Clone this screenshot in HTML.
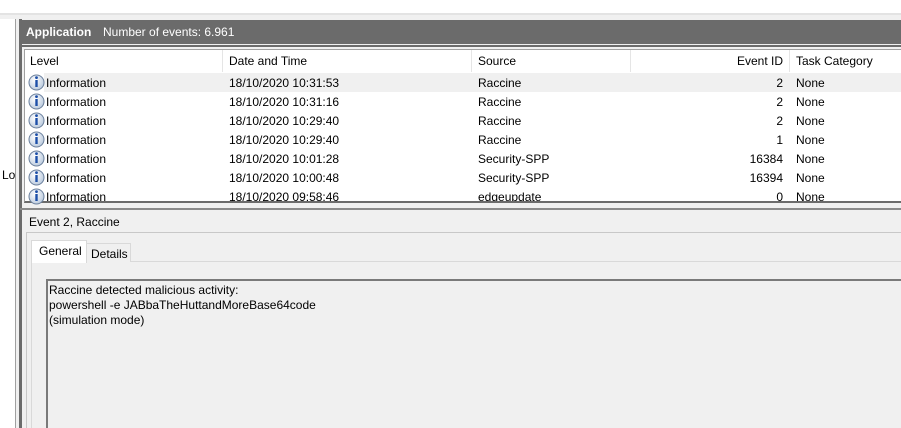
<!DOCTYPE html>
<html><head><meta charset="utf-8"><style>
*{margin:0;padding:0;box-sizing:border-box}
body{width:901px;height:428px;overflow:hidden;background:#f0f0f0;font-family:"Liberation Sans",sans-serif;font-size:12px;color:#000;position:relative}
.a{position:absolute}
.t{position:absolute;white-space:nowrap;line-height:14px}
.row{position:absolute;left:25px;right:0;height:19px}
.ic{position:absolute;left:28px;top:1px;width:17px;height:17px}
</style></head><body>
<div class="a" style="left:0;top:0;width:901px;height:13px;background:#fff"></div>
<div class="a" style="left:0;top:13px;width:901px;height:2px;background:#e3e3e3"></div>
<div class="a" style="left:0;top:19px;width:15px;height:409px;background:#fff"></div>
<div class="a" style="left:15px;top:19px;width:1px;height:409px;background:#a0a0a0"></div>
<div class="t" style="left:2px;top:168px">Lo</div>
<div class="a" style="left:19px;top:19px;width:3px;height:409px;background:#6b6b6b"></div>
<div class="a" style="left:20px;top:20px;width:881px;height:24px;background:#6b6b6b"></div>
<div class="t" style="left:26px;top:25px;color:#fff;font-weight:bold">Application</div>
<div class="t" style="left:103px;top:25px;color:#fff">Number of events: 6.961</div>
<div class="a" style="left:20px;top:45px;width:881px;height:2px;background:#6b6b6b"></div>
<div class="a" style="left:24px;top:49px;width:877px;height:154px;background:#fff;border-left:1px solid #a0a0a0;border-top:1px solid #a0a0a0;border-bottom:2px solid #6b6b6b"></div>
<div class="a" style="left:222px;top:50px;width:1px;height:22px;background:#e5e5e5"></div>
<div class="a" style="left:471px;top:50px;width:1px;height:22px;background:#e5e5e5"></div>
<div class="a" style="left:630px;top:50px;width:1px;height:22px;background:#e5e5e5"></div>
<div class="a" style="left:789px;top:50px;width:1px;height:22px;background:#e5e5e5"></div>
<div class="t" style="left:30px;top:54px">Level</div>
<div class="t" style="left:229px;top:54px">Date and Time</div>
<div class="t" style="left:478px;top:54px">Source</div>
<div class="t" style="left:630px;width:153px;text-align:right;top:54px">Event ID</div>
<div class="t" style="left:796px;top:54px">Task Category</div>
<div class="a" style="left:44px;top:73px;width:857px;height:19px;background:#f0f0f0"></div>
<div id="rows"></div>
<script></script>
<!-- rows -->
<div class="row" style="top:73px"></div>

<svg class="a" style="left:0;top:0" width="901" height="428">
<defs><radialGradient id="g" cx="40%" cy="35%" r="70%"><stop offset="0" stop-color="#fff"/><stop offset="1" stop-color="#b8c8dc"/></radialGradient></defs>
<g id="i"><circle cx="36.5" cy="82.5" r="7.5" fill="url(#g)" stroke="#6a7f9c"/><rect x="35.3" y="80" width="2.4" height="7" fill="#1d4fa8"/><circle cx="36.5" cy="77.6" r="1.4" fill="#1d4fa8"/></g>
<use href="#i" y="19"/><use href="#i" y="38"/><use href="#i" y="57"/><use href="#i" y="76"/><use href="#i" y="95"/><use href="#i" y="114"/>
</svg>

<div class="a" style="left:25px;top:73px;width:876px;height:128px;overflow:hidden">
<div style="position:relative;height:128px">
<div class="t" style="left:21px;top:3px">Information</div><div class="t" style="left:204px;top:3px">18/10/2020 10:31:53</div><div class="t" style="left:453px;top:3px">Raccine</div><div class="t" style="left:605px;width:153px;text-align:right;top:3px">2</div><div class="t" style="left:771px;top:3px">None</div>
<div class="t" style="left:21px;top:22px">Information</div><div class="t" style="left:204px;top:22px">18/10/2020 10:31:16</div><div class="t" style="left:453px;top:22px">Raccine</div><div class="t" style="left:605px;width:153px;text-align:right;top:22px">2</div><div class="t" style="left:771px;top:22px">None</div>
<div class="t" style="left:21px;top:41px">Information</div><div class="t" style="left:204px;top:41px">18/10/2020 10:29:40</div><div class="t" style="left:453px;top:41px">Raccine</div><div class="t" style="left:605px;width:153px;text-align:right;top:41px">2</div><div class="t" style="left:771px;top:41px">None</div>
<div class="t" style="left:21px;top:60px">Information</div><div class="t" style="left:204px;top:60px">18/10/2020 10:29:40</div><div class="t" style="left:453px;top:60px">Raccine</div><div class="t" style="left:605px;width:153px;text-align:right;top:60px">1</div><div class="t" style="left:771px;top:60px">None</div>
<div class="t" style="left:21px;top:79px">Information</div><div class="t" style="left:204px;top:79px">18/10/2020 10:01:28</div><div class="t" style="left:453px;top:79px">Security-SPP</div><div class="t" style="left:605px;width:153px;text-align:right;top:79px">16384</div><div class="t" style="left:771px;top:79px">None</div>
<div class="t" style="left:21px;top:98px">Information</div><div class="t" style="left:204px;top:98px">18/10/2020 10:00:48</div><div class="t" style="left:453px;top:98px">Security-SPP</div><div class="t" style="left:605px;width:153px;text-align:right;top:98px">16394</div><div class="t" style="left:771px;top:98px">None</div>
<div class="t" style="left:21px;top:117px">Information</div><div class="t" style="left:204px;top:117px">18/10/2020 09:58:46</div><div class="t" style="left:453px;top:117px">edgeupdate</div><div class="t" style="left:605px;width:153px;text-align:right;top:117px">0</div><div class="t" style="left:771px;top:117px">None</div>
</div></div>

<div class="a" style="left:20px;top:208px;width:881px;height:2px;background:#8a8a8a"></div>
<div class="t" style="left:29px;top:215px">Event 2, Raccine</div>
<div class="a" style="left:26px;top:232px;width:875px;height:1px;background:#c8c8c8"></div>
<div class="a" style="left:26px;top:233px;width:1px;height:195px;background:#c8c8c8"></div>
<div class="a" style="left:31px;top:261px;width:870px;height:167px;background:#f0f0f0;border-left:1px solid #d9d9d9;border-top:1px solid #d9d9d9"></div>
<div class="a" style="left:86px;top:243px;width:45px;height:19px;background:#f0f0f0;border:1px solid #d9d9d9;border-bottom:none"></div>
<div class="t" style="left:91px;top:247px">Details</div>
<div class="a" style="left:31px;top:240px;width:56px;height:23px;background:#fff;border:1px solid #d9d9d9;border-bottom:none"></div>
<div class="t" style="left:39px;top:244px">General</div>
<div class="a" style="left:46px;top:279px;width:855px;height:149px;border-left:2px solid #7a7a7a;border-top:2px solid #7a7a7a;background:#f0f0f0"></div>
<div class="t" style="left:49px;top:283px">Raccine detected malicious activity:</div>
<div class="t" style="left:49px;top:298px">powershell -e JABbaTheHuttandMoreBase64code</div>
<div class="t" style="left:49px;top:313px">(simulation mode)</div>
</body></html>
